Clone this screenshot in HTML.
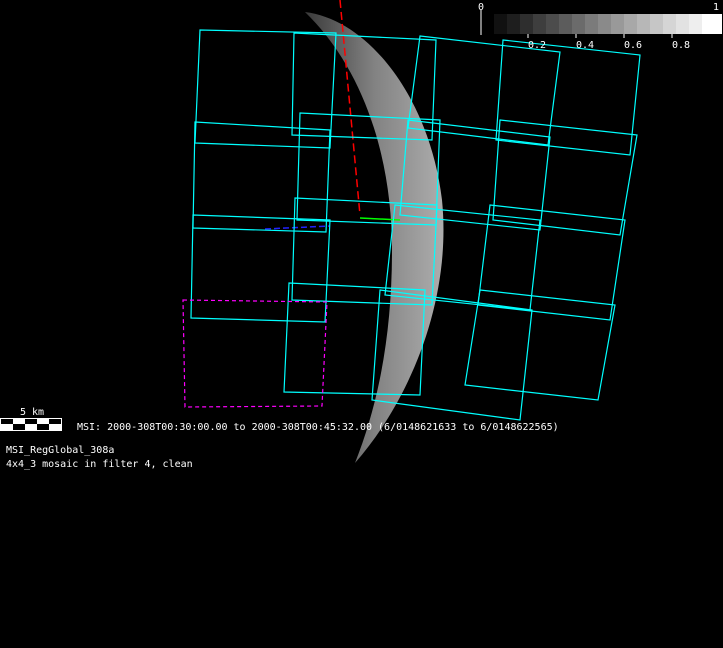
<!DOCTYPE html>
<html><head><style>
html,body{margin:0;padding:0;background:#000;width:723px;height:648px;overflow:hidden}
svg{position:absolute;left:0;top:0}
text{font-family:"DejaVu Sans Mono","Liberation Mono",monospace;font-size:10px;fill:#fff}
</style></head><body>
<svg width="723" height="648" viewBox="0 0 723 648">
<defs>
<linearGradient id="g" x1="0" y1="0" x2="1" y2="0">
<stop offset="0" stop-color="#444"/><stop offset="0.5" stop-color="#999"/><stop offset="1" stop-color="#ccc"/>
</linearGradient>
</defs>
<path d="M305,12 C370,20 430,100 442,200 C452,300 410,400 355,463 C380,400 392,330 392,250 C392,160 365,70 305,12 Z" fill="url(#g)" opacity="0.85"/>
<path d="M340,0 L360,215" stroke="#f00" stroke-width="1.5" stroke-dasharray="8,4" fill="none"/>
<path d="M265,229 L330,226" stroke="#22f" stroke-width="1.5" stroke-dasharray="6,3"/>
<path d="M360,218 L400,220" stroke="#0f0" stroke-width="1.5"/>
<g fill="none" stroke="#0ff" stroke-width="1.2">
<polygon points="200,30 336,33 330,148 195,143"/>
<polygon points="195,122 330,130 326,232 193,228"/>
<polygon points="193,215 330,220 325,322 191,318"/>
<polygon points="294,33 436,40 432,140 292,135"/>
<polygon points="300,113 440,120 436,225 297,220"/>
<polygon points="295,198 437,205 432,305 292,300"/>
<polygon points="289,283 425,290 420,395 284,392"/>
<polygon points="420,36 560,52 548,145 408,128"/>
<polygon points="503,40 640,55 630,155 496,140"/>
<polygon points="408,120 550,137 540,230 400,215"/>
<polygon points="500,120 637,135 620,235 493,220"/>
<polygon points="395,205 540,220 530,310 385,295"/>
<polygon points="490,205 625,220 610,320 478,305"/>
<polygon points="380,290 532,310 520,420 372,400"/>
<polygon points="480,290 615,305 598,400 465,385"/>
</g>
<polygon points="183,300 327,302 322,406 185,407" fill="none" stroke="#f0f" stroke-width="1.2" stroke-dasharray="4,3"/>
<line x1="481" y1="10" x2="481" y2="35" stroke="#fff"/>
<g>
<rect x="494" y="14" width="14" height="20" fill="#111"/><rect x="507" y="14" width="14" height="20" fill="#1e1e1e"/>
<rect x="520" y="14" width="14" height="20" fill="#2e2e2e"/><rect x="533" y="14" width="14" height="20" fill="#3e3e3e"/>
<rect x="546" y="14" width="14" height="20" fill="#4c4c4c"/><rect x="559" y="14" width="14" height="20" fill="#5c5c5c"/>
<rect x="572" y="14" width="14" height="20" fill="#6b6b6b"/><rect x="585" y="14" width="14" height="20" fill="#7b7b7b"/>
<rect x="598" y="14" width="14" height="20" fill="#8a8a8a"/><rect x="611" y="14" width="14" height="20" fill="#999"/>
<rect x="624" y="14" width="14" height="20" fill="#a8a8a8"/><rect x="637" y="14" width="14" height="20" fill="#b7b7b7"/>
<rect x="650" y="14" width="14" height="20" fill="#c6c6c6"/><rect x="663" y="14" width="14" height="20" fill="#d5d5d5"/>
<rect x="676" y="14" width="14" height="20" fill="#e2e2e2"/><rect x="689" y="14" width="14" height="20" fill="#eee"/>
<rect x="702" y="14" width="20" height="20" fill="#fff"/>
</g>
<g stroke="#fff"><line x1="528" y1="34" x2="528" y2="38"/><line x1="576" y1="34" x2="576" y2="38"/><line x1="624" y1="34" x2="624" y2="38"/><line x1="672" y1="34" x2="672" y2="38"/></g>
<text x="478" y="10">0</text><text x="713" y="10">1</text>
<text x="528" y="48">0.2</text><text x="576" y="48">0.4</text><text x="624" y="48">0.6</text><text x="672" y="48">0.8</text>
<text x="20" y="415">5 km</text>
<rect x="0" y="418" width="62" height="13" fill="#fff"/>
<rect x="1" y="419" width="12" height="5" fill="#000"/><rect x="13" y="424" width="12" height="6" fill="#000"/>
<rect x="25" y="419" width="12" height="5" fill="#000"/><rect x="37" y="424" width="12" height="6" fill="#000"/>
<rect x="49" y="419" width="12" height="5" fill="#000"/>
<text x="77" y="430">MSI:  2000-308T00:30:00.00 to 2000-308T00:45:32.00 (6/0148621633 to 6/0148622565)</text>
<text x="6" y="453">MSI_RegGlobal_308a</text>
<text x="6" y="467">4x4_3 mosaic in filter 4, clean</text>
</svg>
</body></html>
